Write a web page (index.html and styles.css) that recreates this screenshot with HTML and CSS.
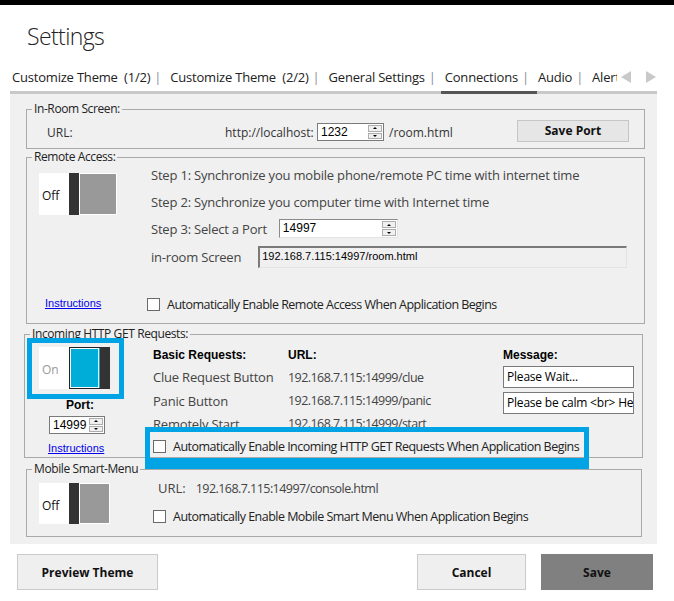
FILE: index.html
```html
<!DOCTYPE html>
<html>
<head>
<meta charset="utf-8">
<title>Settings</title>
<link rel="stylesheet" href="styles.css">
</head>
<body>
<div class="topbar"></div>
<h1 class="title">Settings</h1>
<div class="tabrow">
  <div class="tabs">
    <span class="tab">Customize Theme&nbsp;&nbsp;(1/2)<span class="sep">|</span></span>
    <span class="tab">Customize Theme&nbsp;&nbsp;(2/2)<span class="sep">|</span></span>
    <span class="tab">General Settings<span class="sep">|</span></span>
    <span class="tab">Connections<span class="sep">|</span></span>
    <span class="tab">Audio<span class="sep">|</span></span>
    <span class="tab">Alerts</span>
  </div>
  <div class="arrows">
    <svg class="arrow" width="11" height="12" viewBox="0 0 11 12"><path d="M10 0 L0 6 L10 12 Z"/></svg>
    <svg class="arrow" width="11" height="12" viewBox="0 0 11 12"><path d="M1 0 L11 6 L1 12 Z"/></svg>
  </div>
</div>
<div class="track"><div class="track-active"></div></div>

<div class="panel">
  <section class="group g1">
    <div class="legend">In-Room Screen:</div>
    <div class="g1-row">
      <span class="lbl">URL:</span>
      <span class="lbl">http://localhost:</span>
      <div class="numbox nb-port"><span class="numval">1232</span><span class="spin"><i class="up"></i><i class="down"></i></span></div>
      <span class="lbl room">/room.html</span>
      <span></span>
      <button class="btn btn-save-port">Save Port</button>
    </div>
  </section>

  <section class="group g2">
    <div class="legend">Remote Access:</div>
    <div class="g2-grid">
      <div class="toggle toggle-off ra-toggle"><span class="tg-label">Off</span><span class="tg-bar"></span><span class="tg-thumb"></span></div>
      <div class="step s1">Step 1: Synchronize you mobile phone/remote PC time with internet time</div>
      <div class="step s2">Step 2: Synchronize you computer time with Internet time</div>
      <div class="step s3">Step 3: Select a Port <div class="numbox sunken nb-ra"><span class="numval">14997</span><span class="spin"><i class="up"></i><i class="down"></i></span></div></div>
      <div class="step s4">in-room Screen <div class="readonly">192.168.7.115:14997/room.html</div></div>
      <a class="link ra-link" href="#">Instructions</a>
      <label class="check ra-check"><span class="box"></span>Automatically Enable Remote Access When Application Begins</label>
    </div>
  </section>

  <section class="group g3">
    <div class="legend">Incoming HTTP GET Requests:</div>
    <div class="g3-grid">
      <div class="g3-left">
        <div class="toggle toggle-on"><span class="tg-label">On</span><span class="tg-thumb"></span><span class="tg-bar"></span></div>
        <div class="port-lbl">Port:</div>
        <div class="numbox nb-http"><span class="numval">14999</span><span class="spin"><i class="up"></i><i class="down"></i></span></div>
        <a class="link" href="#">Instructions</a>
      </div>
      <div class="req">
        <div class="hd">Basic Requests:</div>
        <div class="hd">URL:</div>
        <div class="hd">Message:</div>
        <div class="rq">Clue Request Button</div>
        <div class="rq ip">192.168.7.115:14999/clue</div>
        <div class="msg">Please Wait...</div>
        <div class="rq">Panic Button</div>
        <div class="rq ip">192.168.7.115:14999/panic</div>
        <div class="msg msg2">Please be calm &lt;br&gt; Help is on the way</div>
        <div class="rq">Remotely Start</div>
        <div class="rq ip">192.168.7.115:14999/start</div>
        <div></div>
        <label class="check http-check"><span class="box"></span>Automatically Enable Incoming HTTP GET Requests When Application Begins</label>
      </div>
    </div>
    <div class="hl hl1"></div>
    <div class="hl hl2"></div>
  </section>

  <section class="group g4">
    <div class="legend">Mobile Smart-Menu</div>
    <div class="g4-row">
      <div class="toggle toggle-off sm-toggle"><span class="tg-label">Off</span><span class="tg-bar"></span><span class="tg-thumb"></span></div>
      <div class="g4-right">
        <div class="murl"><span class="mlabel">URL:</span><span class="ip">192.168.7.115:14997/console.html</span></div>
        <label class="check"><span class="box"></span>Automatically Enable Mobile Smart Menu When Application Begins</label>
      </div>
    </div>
  </section>
</div>

<div class="actions">
  <button class="btn big">Preview Theme</button>
  <span class="spacer"></span>
  <button class="btn big cancel">Cancel</button>
  <button class="btn big save">Save</button>
</div>
</body>
</html>
```

FILE: styles.css
```css
* { box-sizing: border-box; }
html, body { margin: 0; padding: 0; }
body {
  width: 674px;
  height: 601px;
  overflow: hidden;
  background: #fff;
  font-family: "Open Sans", "Noto Sans", sans-serif;
  color: #333;
}

.topbar { height: 5px; background: #000; }

.title {
  margin: 0;
  padding: 15px 0 0 27px;
  font-size: 23px;
  line-height: 32px;
  font-weight: 300;
  letter-spacing: -0.6px;
  color: #222;
}

/* tabs */
.tabrow {
  margin-top: 14px;
  height: 22px;
  display: flex;
  align-items: center;
}
.tabs {
  width: 617px;
  padding-left: 12px;
  display: flex;
  white-space: nowrap;
  overflow: hidden;
  font-size: 13px;
  line-height: 20px;
  letter-spacing: -0.2px;
  color: #222;
}
.tab { margin-right: 9px; }
.sep { color: #8a8a9a; margin-left: 4px; }
.arrows { display: flex; gap: 13px; margin-left: 4px; }
.arrow { fill: #c9c9c9; display: block; }

.track {
  margin: 3px 17px 0 10px;
  height: 3px;
  background: #c8c8c8;
}
.track-active { margin-left: 431px; width: 96px; height: 3px; background: #555; }

/* panel */
.panel {
  margin: 0 17px 0 10px;
  height: 450px;
  background: #f0f0f0;
  padding-top: 15px;
}

.group {
  position: relative;
  border: 1px solid #a9a9a9;
  margin-left: 16px;
  width: 619px;
}
.legend {
  margin: -8px 0 0 5px;
  padding: 0 2px;
  width: max-content;
  background: #f0f0f0;
  font-size: 12px;
  line-height: 14px;
  letter-spacing: -0.4px;
  color: #222;
}

.lbl { font-size: 12px; color: #333; }

/* number boxes */
.numbox {
  display: flex;
  align-items: stretch;
  background: #fff;
  border: 1px solid #7a7a7a;
  font-family: "Liberation Sans", Arial, sans-serif;
  font-size: 12px;
  color: #000;
}
.numval { flex: 1; padding-left: 3px; line-height: 16px; }
.spin {
  width: 15px;
  display: flex;
  flex-direction: column;
  gap: 1px;
  padding: 1px 1px 1px 0;
}
.spin i {
  flex: 1;
  position: relative;
  background: #f0f0f0;
  border: 1px solid #adadad;
}
.spin i::after {
  content: "";
  position: absolute;
  left: 50%;
  top: 50%;
  margin-left: -2px;
  border-left: 2px solid transparent;
  border-right: 2px solid transparent;
}
.spin .up::after { margin-top: -1px; border-bottom: 2px solid #000; }
.spin .down::after { margin-top: -1px; border-top: 2px solid #000; }

.sunken { border-color: #8a8a8a #e3e3e3 #e3e3e3 #8a8a8a; border-width: 1px; }

/* g1 */
.g1 { height: 40px; }
.g1-row {
  display: grid;
  grid-template-columns: 178px 92px 67px auto 1fr 112px;
  align-items: center;
  padding: 0 15px 0 20px;
  margin-top: 6px;
  height: 20px;
}
.nb-port { height: 18px; }
.room { padding-left: 5px; }
.btn {
  font-family: "Open Sans", sans-serif;
  font-weight: 700;
  font-size: 12px;
  color: #111;
  background: #e5e5e5;
  border: 1px solid #adadad;
  padding: 0;
}
.btn-save-port { height: 22px; margin-top: -3px; background: #e6e6e6; border-color: #c6c6c6; }

/* toggle */
.toggle { display: flex; height: 42px; }
.tg-label {
  width: 30px;
  background: #fff;
  font-size: 12px;
  line-height: 45px;
  padding-left: 3px;
  color: #111;
}
.tg-bar { width: 10px; background: #333; }
.tg-thumb { background: #999; border: 1px solid #fff; }
.toggle-on .tg-label { color: #999; }
.toggle-on .tg-thumb { width: 31px; background: #00acd8; border: 1px solid #222; border-right: 0; outline: 1px solid #fff; outline-offset: -2px; }

/* g2 */
.g2 { margin-top: 8px; height: 167px; }
.g2-grid {
  display: grid;
  grid-template-columns: 124px 1fr;
  grid-template-rows: 22px 31px 23px 34px 1fr;
  height: 158px;
}
.ra-toggle { grid-column: 1; grid-row: 1 / 4; margin: 9px 0 0 12px; width: 78px; }
.ra-toggle .tg-thumb { width: 38px; }
.step {
  grid-column: 2;
  display: flex;
  align-items: center;
  font-size: 13px;
  letter-spacing: -0.2px;
  color: #444;
  white-space: nowrap;
}
.s1 { grid-row: 1; }
.s2 { grid-row: 2; }
.s3 { grid-row: 3; }
.s4 { grid-row: 4; }
.nb-ra { width: 119px; height: 19px; margin-left: 12px; letter-spacing: 0; }
.readonly {
  margin-left: 17px;
  width: 369px;
  height: 22px;
  border: 1px solid;
  border-width: 2px 1px 1px 2px;
  border-color: #7a7a7a #e3e3e3 #e3e3e3 #7a7a7a;
  background: #f0f0f0;
  font-family: "Liberation Sans", Arial, sans-serif;
  font-size: 11px;
  line-height: 16px;
  letter-spacing: 0;
  color: #000;
  padding-left: 2px;
}
.link {
  font-family: "Liberation Sans", Arial, sans-serif;
  font-size: 11px;
  line-height: 14px;
  color: #00e;
  text-decoration: underline;
}
.ra-link { grid-column: 1; grid-row: 5; align-self: end; margin: 0 0 12px 18px; width: max-content; }
.check {
  display: flex;
  align-items: center;
  gap: 7px;
  font-size: 12.5px;
  letter-spacing: -0.52px;
  color: #222;
  white-space: nowrap;
}
.box { width: 13px; height: 13px; border: 1px solid #6a6a6a; background: #fff; }
.ra-check { grid-column: 2; grid-row: 5; align-self: end; margin: 0 0 8px -4px; height: 20px; }

/* g3 */
.g3 { margin-top: 10px; margin-left: 14px; height: 124px; }
.g3-grid { display: grid; grid-template-columns: 128px 1fr; }
.g3-left { display: flex; flex-direction: column; }
.toggle-on { margin: 6px 0 0 14px; width: 71px; }
.port-lbl {
  margin: 9px 0 0 0;
  width: 110px;
  text-align: center;
  font-family: "Liberation Sans", Arial, sans-serif;
  font-weight: 700;
  font-size: 12px;
  line-height: 14px;
  color: #000;
}
.nb-http { margin: 4px 0 0 24px; width: 56px; height: 18px; }
.g3-left .link { margin: 7px 0 0 23px; width: max-content; }

.req {
  display: grid;
  grid-template-columns: 135px 215px 131px;
  grid-template-rows: 20px 24px 23px 23px 22px;
  margin-top: 4px;
  align-items: center;
}
.hd {
  font-family: "Liberation Sans", Arial, sans-serif;
  font-weight: 700;
  font-size: 12px;
  color: #000;
}
.rq { font-size: 13px; letter-spacing: -0.2px; color: #444; white-space: nowrap; }
.ip { font-size: 12.5px; letter-spacing: -0.55px; }
.msg {
  height: 22px;
  border: 1px solid #7a7a7a;
  background: #fff;
  font-size: 12px;
  letter-spacing: -0.2px;
  line-height: 20px;
  padding-left: 3px;
  color: #000;
  white-space: nowrap;
  overflow: hidden;
}
.msg2 { margin-top: 5px; }
.http-check { grid-column: 1 / 4; margin-left: 0; }

.hl { position: absolute; border: 5px solid #00a3e4; }
.hl1 { left: 2px; top: 3px; width: 97px; height: 61px; }
.hl2 { left: 120px; top: 92px; width: 444px; height: 42px; border-bottom-width: 11px; }

/* g4 */
.g4 { margin-top: 11px; width: 616px; height: 68px; }
.g4-row { display: flex; }
.sm-toggle { margin: 7px 0 0 12px; width: 71px; height: 41px; }
.sm-toggle .tg-thumb { width: 31px; }
.g4-right { margin-left: 43px; display: flex; flex-direction: column; }
.murl { font-size: 13px; color: #444; line-height: 20px; margin: 2px 0 0 5px; }
.mlabel { margin-right: 10px; }
.g4 .check { margin-top: 9px; }

/* bottom actions */
.actions {
  display: flex;
  margin: 10px 21px 0 17px;
  gap: 15px;
}
.spacer { flex: 1; }
.big { height: 36px; font-size: 12px; background: #efefef; border: 1px solid #cbcbcb; }
.actions .big:first-child { width: 141px; }
.cancel { width: 109px; }
.save { width: 112px; background: #808080; border-color: #808080; color: #111; }
```
